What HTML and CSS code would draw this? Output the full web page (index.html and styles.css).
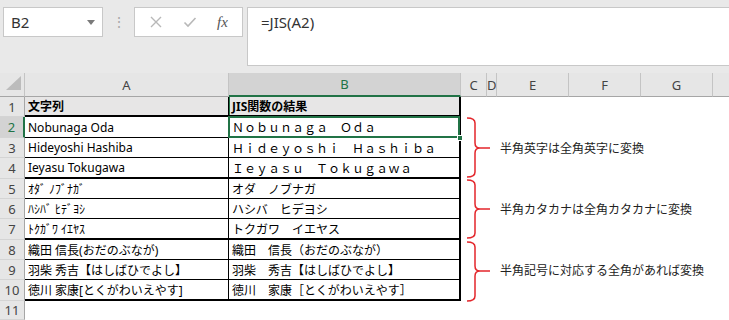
FILE: index.html
```html
<!DOCTYPE html>
<html lang="ja">
<head>
    <meta charset="UTF-8">
    <title>JIS関数</title>
    <link rel="stylesheet" href="styles.css">
</head>
<body>
    <div class="toolbar">
        <div class="namebox"><span>B2</span><span class="caret"></span></div>
        <div class="grip">⋮</div>
        <div class="fxbox">
            <svg class="tool" width="14" height="14" viewBox="0 0 14 14"><path d="M2 2 L12 12 M12 2 L2 12" stroke="#b8b8b8" stroke-width="1.4" fill="none"/></svg>
            <svg class="tool" width="14" height="14" viewBox="0 0 14 14"><path d="M1.5 7.5 L5 11 L12.5 3" stroke="#b8b8b8" stroke-width="1.6" fill="none"/></svg>
            <span class="fx">fx</span>
        </div>
        <div class="formula">=JIS(A2)</div>
    </div>

    <div class="sheet">
        <div class="hd corner"><span class="tri"></span></div>
        <div class="hd">A</div>
        <div class="hd active">B</div>
        <div class="hd">C</div>
        <div class="hd narrow">D</div>
        <div class="hd">E</div>
        <div class="hd">F</div>
        <div class="hd">G</div>
        <div class="hd last"></div>

        <div class="rh">1</div>
        <div class="c a title thick">文字列</div>
        <div class="c b title thick mark">JIS関数の結果</div>

        <div class="rh active">2</div>
        <div class="c a">Nobunaga Oda</div>
        <div class="c b sel">Ｎｏｂｕｎａｇａ　Ｏｄａ<span class="handle"></span></div>

        <div class="rh">3</div>
        <div class="c a">Hideyoshi Hashiba</div>
        <div class="c b">Ｈｉｄｅｙｏｓｈｉ　Ｈａｓｈｉｂａ</div>
        <div class="note">半角英字は全角英字に変換</div>

        <div class="rh">4</div>
        <div class="c a thick">Ieyasu Tokugawa</div>
        <div class="c b thick">Ｉｅｙａｓｕ　Ｔｏｋｕｇａｗａ</div>

        <div class="rh">5</div>
        <div class="c a">ｵﾀﾞ ﾉﾌﾞﾅｶﾞ</div>
        <div class="c b">オダ　ノブナガ</div>

        <div class="rh">6</div>
        <div class="c a">ﾊｼﾊﾞ ﾋﾃﾞﾖｼ</div>
        <div class="c b">ハシバ　ヒデヨシ</div>
        <div class="note">半角カタカナは全角カタカナに変換</div>

        <div class="rh">7</div>
        <div class="c a thick">ﾄｸｶﾞﾜ ｲｴﾔｽ</div>
        <div class="c b thick">トクガワ　イエヤス</div>

        <div class="rh">8</div>
        <div class="c a">織田 信長(おだのぶなが)</div>
        <div class="c b">織田　信長（おだのぶなが）</div>

        <div class="rh">9</div>
        <div class="c a">羽柴 秀吉【はしばひでよし】</div>
        <div class="c b">羽柴　秀吉【はしばひでよし】</div>
        <div class="note">半角記号に対応する全角があれば変換</div>

        <div class="rh">10</div>
        <div class="c a thick">徳川 家康[とくがわいえやす]</div>
        <div class="c b thick">徳川　家康［とくがわいえやす］</div>

        <div class="rh">11</div>

        <svg class="braces" width="729" height="247" viewBox="0 0 729 247">
            <g stroke="#e3262b" stroke-width="1.5" fill="none">
                <path d="M467,45 Q475,45 475,50 L475,70 Q475,75 480,75 L490,75 M480,75 Q475,75 475,80 L475,99 Q475,104 467,104"/>
                <path d="M467,107 Q475,107 475,112 L475,131 Q475,136 480,136 L490,136 M480,136 Q475,136 475,141 L475,160 Q475,165 467,165"/>
                <path d="M467,169 Q475,169 475,174 L475,193 Q475,198 480,198 L490,198 M480,198 Q475,198 475,203 L475,223 Q475,228 467,228"/>
            </g>
        </svg>
    </div>
</body>
</html>
```

FILE: styles.css
```css
html, body {
    margin: 0;
    height: 100%;
}
body {
    background-color: #fff;
    font-family: "Noto Sans", "Noto Sans CJK JP", sans-serif;
    overflow: hidden;
}
* {
    box-sizing: border-box;
}

/* 数式バー */
.toolbar {
    display: flex;
    align-items: flex-start;
    height: 73px;
    padding: 7px 0 0 3px;
    background-color: #e9e9e9;
}
.namebox {
    display: flex;
    align-items: center;
    justify-content: space-between;
    width: 100px;
    height: 30px;
    padding: 0 7px 0 7px;
    background-color: #fff;
    border: 1px solid #c8c8c8;
    font-size: 15px;
    color: #333;
}
.caret {
    border-left: 4px solid transparent;
    border-right: 4px solid transparent;
    border-top: 5px solid #7a7a7a;
}
.grip {
    width: 31px;
    text-align: center;
    color: #a8a8a8;
    font-size: 14px;
    line-height: 30px;
}
.fxbox {
    display: flex;
    align-items: center;
    justify-content: space-around;
    width: 109px;
    height: 30px;
    margin-right: 4px;
    padding: 0 4px;
    background-color: #fff;
    border: 1px solid #c8c8c8;
}
.fx {
    font-family: "Liberation Serif", serif;
    font-style: italic;
    font-size: 15px;
    color: #555;
}
.formula {
    flex: 1;
    height: 59px;
    padding: 4px 0 0 13px;
    background-color: #fff;
    border: 1px solid #c8c8c8;
    border-right: 0;
    font-size: 15px;
    color: #333;
}

/* シート */
.sheet {
    position: relative;
    display: grid;
    grid-template-columns: 25px 204px 232px 26px 10px 72px 72px 72px 1fr;
    grid-template-rows: 24px 20px 21px 20px 21px 20px 20px 21px 20px 20px 21px 19px;
}
.hd {
    display: flex;
    align-items: center;
    justify-content: center;
    background-color: #e6e6e6;
    border-right: 1px solid #c4c4c4;
    border-bottom: 1px solid #a6a6a6;
    font-size: 13px;
    color: #444;
    overflow: hidden;
}
.hd.narrow {
    justify-content: flex-start;
}
.hd.last {
    border-right: 0;
}
.hd.active {
    background-color: #d3d3d3;
    color: #217346;
    border-bottom: 2px solid #217346;
}
.corner {
    align-items: flex-end;
    justify-content: flex-end;
    padding: 0 3px 6px 0;
}
.tri {
    border-left: 15px solid transparent;
    border-bottom: 14px solid #bcbcbc;
}
.rh {
    grid-column: 1;
    display: flex;
    align-items: center;
    justify-content: center;
    background-color: #e6e6e6;
    border-right: 1px solid #a6a6a6;
    border-bottom: 1px solid #d4d4d4;
    font-size: 13px;
    color: #444;
}
.rh.active {
    background-color: #d3d3d3;
    color: #217346;
    border-right: 2px solid #217346;
}
.c {
    display: flex;
    align-items: center;
    padding-left: 3px;
    font-size: 12px;
    color: #000;
    white-space: nowrap;
    border-bottom: 1px solid #000;
}
.c.a {
    border-right: 1px solid #000;
}
.c.b {
    border-right: 2px solid #000;
}
.c.thick {
    border-bottom-width: 2px;
}
.c.title {
    background-color: #e7e6e6;
    font-weight: bold;
}
.c.mark {
    box-shadow: inset 1px 0 0 #217346;
}
.sel {
    position: relative;
}
.sel::after {
    content: "";
    position: absolute;
    top: -1px;
    left: -1px;
    right: -1px;
    bottom: -1px;
    border: 2px solid #217346;
}
.handle {
    position: absolute;
    right: -4px;
    bottom: -4px;
    width: 6px;
    height: 6px;
    background-color: #217346;
    border: 1px solid #fff;
    z-index: 2;
}
.note {
    grid-column: 6 / -1;
    display: flex;
    align-items: center;
    padding-left: 3px;
    font-size: 12px;
    color: #222;
    white-space: nowrap;
}
.braces {
    position: absolute;
    top: 0;
    left: 0;
    pointer-events: none;
}
```
